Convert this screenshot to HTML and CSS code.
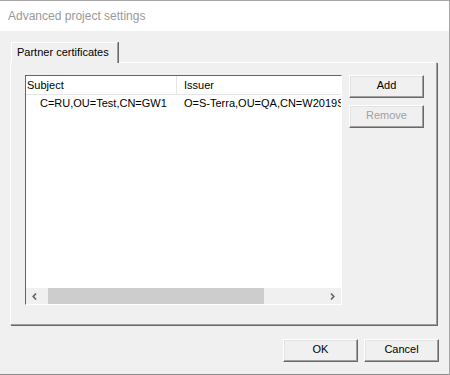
FILE: index.html
```html
<!DOCTYPE html>
<html>
<head>
  <title>Advanced project settings</title>
  <link rel="stylesheet" href="styles.css">
</head>
<body>
  <div class="window">
    <div class="titlebar">Advanced project settings</div>
    <div class="dialog">
      <div class="tabs">
        <div class="tab">Partner certificates</div>
      </div>
      <div class="panel">
        <div class="listview">
          <div class="lv-header">
            <div class="col col-subject">Subject</div>
            <div class="col col-issuer">Issuer</div>
          </div>
          <div class="lv-rows">
            <div class="lv-row">
              <span class="cell cell-subject">C=RU,OU=Test,CN=GW1</span>
              <span class="cell cell-issuer">O=S-Terra,OU=QA,CN=W2019SRV-CA</span>
            </div>
          </div>
          <div class="hscroll">
            <span class="arrow">
              <svg width="5" height="7" viewBox="0 0 5 7"><polyline points="4,0.5 1.2,3.5 4,6.5" fill="none" stroke="#606060" stroke-width="1.6"/></svg>
            </span>
            <div class="track"><div class="thumb"></div></div>
            <span class="arrow">
              <svg width="5" height="7" viewBox="0 0 5 7"><polyline points="1,0.5 3.8,3.5 1,6.5" fill="none" stroke="#606060" stroke-width="1.6"/></svg>
            </span>
          </div>
        </div>
        <div class="side-buttons">
          <button class="btn">Add</button>
          <button class="btn" disabled>Remove</button>
        </div>
      </div>
      <div class="footer">
        <button class="btn">OK</button>
        <button class="btn">Cancel</button>
      </div>
    </div>
  </div>
</body>
</html>
```

FILE: styles.css
```css
body {
  margin: 0;
  font-family: "Liberation Sans", Arial, sans-serif;
  font-size: 11px;
  color: #000;
}

.window {
  width: 450px;
  height: 375px;
  box-sizing: border-box;
  border-top: 1px solid #a6a6a6;
  border-right: 1px solid #a6a6a6;
  border-bottom: 1px solid #8c8c8c;
  display: flex;
  flex-direction: column;
}

.titlebar {
  height: 30px;
  line-height: 30px;
  padding-left: 8px;
  background: #fff;
  color: #999;
  font-size: 12px;
}

.dialog {
  flex: 1;
  background: #f0f0f0;
}

.tabs {
  padding-top: 11px;
  padding-left: 11px;
  display: flex;
}

.tab {
  position: relative;
  z-index: 1;
  width: 107px;
  height: 21px;
  box-sizing: border-box;
  margin-bottom: -1px;
  padding: 1px 0 0 5px;
  line-height: 17px;
  background: #f0f0f0;
  border-top: 1px solid #fff;
  border-left: 1px solid #fff;
  border-right: 1px solid #a0a0a0;
  box-shadow: 1px 0 0 #696969;
}

.panel {
  margin-left: 10px;
  width: 427px;
  height: 263px;
  box-sizing: border-box;
  border-top: 1px solid #fff;
  border-left: 1px solid #fff;
  border-right: 1px solid #a0a0a0;
  border-bottom: 1px solid #a0a0a0;
  box-shadow: 1px 1px 0 #696969;
  padding: 12px 0 0 14px;
  display: flex;
  align-items: flex-start;
  gap: 7px;
}

.listview {
  width: 317px;
  height: 230px;
  box-sizing: border-box;
  background: #fff;
  border-top: 1px solid #646464;
  border-left: 1px solid #646464;
  border-right: 1px solid #fff;
  border-bottom: 1px solid #fff;
  display: flex;
  flex-direction: column;
  overflow: hidden;
}

.lv-header {
  display: flex;
  height: 17px;
  border-bottom: 1px solid #e5e5e5;
  line-height: 16px;
  padding-top: 1px;
  box-sizing: content-box;
}

.col {
  white-space: nowrap;
}

.col-subject {
  width: 149px;
  padding-left: 1px;
  border-right: 1px solid #e5e5e5;
  margin-top: -1px;
  line-height: 17px;
  padding-top: 1px;
}

.col-issuer {
  padding-left: 7px;
}

.lv-rows {
  flex: 1;
}

.lv-row {
  display: flex;
  height: 16px;
  line-height: 16px;
  white-space: nowrap;
}

.cell-subject {
  width: 137px;
  padding-left: 14px;
  flex-shrink: 0;
}

.cell-issuer {
  padding-left: 7px;
}

.hscroll {
  height: 16px;
  display: flex;
  background: #f0f0f0;
}

.arrow {
  width: 17px;
  display: flex;
  align-items: center;
  justify-content: center;
}

.track {
  flex: 1;
  display: flex;
}

.thumb {
  margin-left: 5px;
  width: 216px;
  background: #cdcdcd;
}

.side-buttons {
  display: flex;
  flex-direction: column;
  gap: 7px;
}

.btn {
  width: 75px;
  height: 23px;
  box-sizing: border-box;
  padding: 0 0 2px 0;
  margin: 0;
  font-family: "Liberation Sans", Arial, sans-serif;
  font-size: 11px;
  line-height: 19px;
  color: #000;
  background: #f0f0f0;
  border: 1px solid;
  border-color: #fff #696969 #696969 #fff;
  box-shadow: inset -1px -1px 0 #a0a0a0, inset 1px 1px 0 #e3e3e3;
}

.btn:disabled {
  color: #a0a0a0;
}

.footer {
  display: flex;
  justify-content: flex-end;
  gap: 6px;
  margin-top: 14px;
  padding-right: 10px;
}
```
